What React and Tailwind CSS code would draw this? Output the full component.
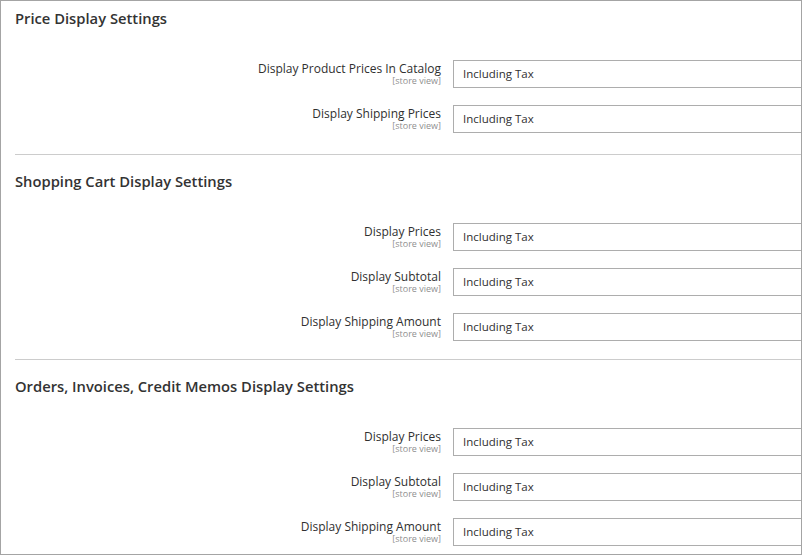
import React from 'react';

const sections = [
  {
    title: 'Price Display Settings',
    rows: ['Display Product Prices In Catalog', 'Display Shipping Prices'],
  },
  {
    title: 'Shopping Cart Display Settings',
    rows: ['Display Prices', 'Display Subtotal', 'Display Shipping Amount'],
  },
  {
    title: 'Orders, Invoices, Credit Memos Display Settings',
    rows: ['Display Prices', 'Display Subtotal', 'Display Shipping Amount'],
  },
];

function Row({ label }) {
  return (
    <div className="flex items-start">
      <div className="w-[426px] shrink-0 pt-[1px] text-right">
        <div className="text-[12px] leading-[15px] text-[#303030]">{label}</div>
        <div className="text-[9px] leading-[10px] text-[#8f8f8f]">[store view]</div>
      </div>
      <div className="ml-[12px] flex-1 h-[28px] border border-r-0 border-[#adadad] bg-white flex items-center pl-[9px] text-[11.5px] text-[#303030]">
        Including Tax
      </div>
    </div>
  );
}

export default function App() {
  return (
    <div
      className="w-[802px] h-[555px] border border-[#a4a4a4] bg-white overflow-hidden"
      style={{ fontFamily: '"Open Sans", "Noto Sans", sans-serif' }}
    >
      <div className="pl-[14px]">
        {sections.map((s, i) => (
          <div
            key={s.title}
            className={i === 0 ? 'pt-[7px] pb-[21px]' : 'border-t border-[#cccccc] pt-[16px] pb-[18px]'}
          >
            <h2 className="text-[14.75px] leading-[20px] font-semibold text-[#333333]">{s.title}</h2>
            <div className="mt-[32px] flex flex-col gap-[17px]">
              {s.rows.map((r) => (
                <Row key={r} label={r} />
              ))}
            </div>
          </div>
        ))}
      </div>
    </div>
  );
}
